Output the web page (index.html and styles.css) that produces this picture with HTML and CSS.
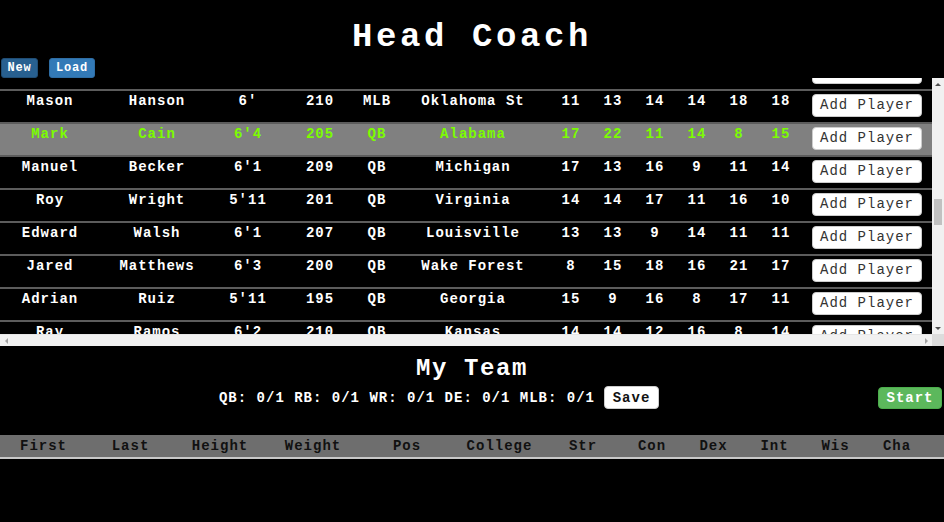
FILE: index.html
```html
<!DOCTYPE html>
<html lang="en">
<head>
<meta charset="utf-8">
<title>Head Coach</title>
<link rel="stylesheet" href="styles.css">
</head>
<body>
<h1 class="title">Head Coach</h1>
<div class="file-btns">
  <button class="btn-file btn-new">New</button>
  <button class="btn-file btn-load">Load</button>
</div>
<div class="pool-frame">
  <div class="pool" id="pool">
    <table class="players">
      <colgroup>
        <col class="c-first"><col class="c-last"><col class="c-height"><col class="c-weight"><col class="c-pos"><col class="c-college">
        <col class="c-stat"><col class="c-stat"><col class="c-stat"><col class="c-stat"><col class="c-stat"><col class="c-stat"><col class="c-action">
      </colgroup>
      <tbody id="pool-body">
        <tr><td></td><td></td><td></td><td></td><td></td><td></td><td></td><td></td><td></td><td></td><td></td><td></td><td class="act"><button class="btn-add btn-add-hidden" aria-label="Add Player"></button></td></tr>
        <tr><td>Mason</td><td>Hanson</td><td>6'</td><td>210</td><td>MLB</td><td>Oklahoma St</td><td>11</td><td>13</td><td>14</td><td>14</td><td>18</td><td>18</td><td class="act"><button class="btn-add">Add Player</button></td></tr>
        <tr class="selected"><td>Mark</td><td>Cain</td><td>6'4</td><td>205</td><td>QB</td><td>Alabama</td><td>17</td><td>22</td><td>11</td><td>14</td><td>8</td><td>15</td><td class="act"><button class="btn-add">Add Player</button></td></tr>
        <tr><td>Manuel</td><td>Becker</td><td>6'1</td><td>209</td><td>QB</td><td>Michigan</td><td>17</td><td>13</td><td>16</td><td>9</td><td>11</td><td>14</td><td class="act"><button class="btn-add">Add Player</button></td></tr>
        <tr><td>Roy</td><td>Wright</td><td>5'11</td><td>201</td><td>QB</td><td>Virginia</td><td>14</td><td>14</td><td>17</td><td>11</td><td>16</td><td>10</td><td class="act"><button class="btn-add">Add Player</button></td></tr>
        <tr><td>Edward</td><td>Walsh</td><td>6'1</td><td>207</td><td>QB</td><td>Louisville</td><td>13</td><td>13</td><td>9</td><td>14</td><td>11</td><td>11</td><td class="act"><button class="btn-add">Add Player</button></td></tr>
        <tr><td>Jared</td><td>Matthews</td><td>6'3</td><td>200</td><td>QB</td><td>Wake Forest</td><td>8</td><td>15</td><td>18</td><td>16</td><td>21</td><td>17</td><td class="act"><button class="btn-add">Add Player</button></td></tr>
        <tr><td>Adrian</td><td>Ruiz</td><td>5'11</td><td>195</td><td>QB</td><td>Georgia</td><td>15</td><td>9</td><td>16</td><td>8</td><td>17</td><td>11</td><td class="act"><button class="btn-add">Add Player</button></td></tr>
        <tr><td>Ray</td><td>Ramos</td><td>6'2</td><td>210</td><td>QB</td><td>Kansas</td><td>14</td><td>14</td><td>12</td><td>16</td><td>8</td><td>14</td><td class="act"><button class="btn-add">Add Player</button></td></tr>
      </tbody>
    </table>
  </div>
  <div class="vbar">
    <span class="arrow arrow-up"></span>
    <div class="vtrack"><div class="vthumb"></div></div>
    <span class="arrow arrow-down"></span>
  </div>
  <div class="hbar">
    <span class="arrow arrow-left"></span>
    <div class="htrack"></div>
    <span class="arrow arrow-right"></span>
  </div>
  <div class="corner"></div>
</div>
<section class="team">
  <h2 class="team-title">My Team</h2>
  <div class="team-bar">
    <div class="slots">
      <span class="slot-text">QB: 0/1 RB: 0/1 WR: 0/1 DE: 0/1 MLB: 0/1</span>
      <button class="btn-save">Save</button>
    </div>
    <button class="btn-start">Start</button>
  </div>
  <table class="team-table">
    <colgroup>
      <col class="t1"><col class="t2"><col class="t3"><col class="t4"><col class="t5"><col class="t6"><col class="t7">
      <col class="t8"><col class="t9"><col class="t10"><col class="t11"><col class="t12"><col class="t13">
    </colgroup>
    <thead>
      <tr><th>First</th><th>Last</th><th>Height</th><th>Weight</th><th>Pos</th><th>College</th><th>Str</th><th>Con</th><th>Dex</th><th>Int</th><th>Wis</th><th>Cha</th><th></th></tr>
    </thead>
    <tbody></tbody>
  </table>
</section>
<script src="app.js"></script>
</body>
</html>
```

FILE: styles.css
```css
html, body {
  margin: 0;
  padding: 0;
  background: #000;
  color: #fff;
  font-family: "Liberation Mono", "DejaVu Sans Mono", monospace;
  font-weight: bold;
}

.title {
  margin: 20px 0 0;
  height: 34px;
  font-size: 34px;
  line-height: 34px;
  letter-spacing: 3.6px;
  text-align: center;
  font-weight: bold;
}

.file-btns {
  display: flex;
  gap: 11px;
  padding: 4px 0 0 1px;
  height: 20px;
}

.btn-file {
  height: 20px;
  padding: 0;
  border: 1px solid #2e6da4;
  border-radius: 3px;
  color: #fff;
  font-family: inherit;
  font-weight: bold;
  font-size: 12px;
  letter-spacing: 0.8px;
  line-height: 18px;
}
.btn-new { background: #286090; border-color: #204d74; width: 37px; }
.btn-load { background: #337ab7; width: 46px; }

/* scroll frame */
.pool-frame {
  display: grid;
  grid-template-columns: 1fr 12px;
  grid-template-rows: 256px 12px;
}
.pool {
  overflow: hidden;
  min-width: 0;
}
.vbar {
  display: flex;
  flex-direction: column;
  background: #f1f1f1;
}
.vtrack {
  flex: 1;
  position: relative;
}
.vthumb {
  position: absolute;
  left: 2px;
  right: 2px;
  top: 109px;
  height: 26px;
  background: #c1c1c1;
}
.hbar {
  display: flex;
  background: #f1f1f1;
  border-top: 1px solid #e6e6e6;
}
.htrack { flex: 1; }
.corner { background: #dcdcdc; }

.arrow {
  flex: 0 0 12px;
  width: 12px;
  height: 12px;
  display: flex;
  align-items: center;
  justify-content: center;
}
.arrow::before {
  content: "";
  width: 0;
  height: 0;
}
.arrow-up::before {
  border-left: 3px solid transparent;
  border-right: 3px solid transparent;
  border-bottom: 3px solid #505050;
}
.arrow-down::before {
  border-left: 3px solid transparent;
  border-right: 3px solid transparent;
  border-top: 3px solid #505050;
}
.arrow-left::before {
  border-top: 3px solid transparent;
  border-bottom: 3px solid transparent;
  border-right: 3px solid #a3a3a3;
}
.arrow-right::before {
  border-top: 3px solid transparent;
  border-bottom: 3px solid transparent;
  border-left: 3px solid #a3a3a3;
}

.players {
  width: 100%;
  table-layout: fixed;
  border-collapse: separate;
  border-spacing: 0;
  font-size: 14px;
  letter-spacing: 1px;
}
.c-first { width: 100px; }
.c-last { width: 114px; }
.c-height { width: 68px; }
.c-weight { width: 76px; }
.c-pos { width: 38px; }
.c-college { width: 154px; }
.c-stat { width: 42px; }
.c-action { width: 130px; }

.players td {
  box-sizing: border-box;
  height: 33px;
  padding: 2px 0 0;
  border-top: 2px solid #5c5c5c;
  text-align: center;
  vertical-align: top;
  line-height: 16px;
  white-space: nowrap;
}
.players td.act {
  padding: 3px 0 0;
}
.players tr.selected td {
  background: #808080;
  color: #7cfc00;
}

.btn-add {
  width: 110px;
  height: 23px;
  padding: 0;
  background: #fff;
  border: 1px solid #ccc;
  border-radius: 4px;
  color: #333;
  font-family: inherit;
  font-size: 14px;
  font-weight: normal;
  letter-spacing: 1px;
  line-height: 21px;
  vertical-align: top;
}

.team-title {
  margin: 11px 0 0;
  height: 24px;
  font-size: 24px;
  line-height: 24px;
  letter-spacing: 1.6px;
  text-align: center;
}

.team-bar {
  display: flex;
  align-items: center;
  margin-top: 5px;
  height: 23px;
  padding-right: 2px;
}
.slots {
  flex: 1;
  display: flex;
  justify-content: center;
  align-items: center;
  gap: 9px;
  font-size: 14px;
  letter-spacing: 1px;
}
.btn-save {
  width: 55px;
  height: 23px;
  padding: 0;
  background: #fff;
  border: 1px solid #ccc;
  border-radius: 4px;
  color: #111;
  font-family: inherit;
  font-weight: bold;
  font-size: 14px;
  letter-spacing: 1px;
}
.btn-start {
  width: 64px;
  height: 22px;
  padding: 0;
  background: #5cb85c;
  border: 1px solid #4cae4c;
  border-radius: 4px;
  color: #fff;
  font-family: inherit;
  font-weight: bold;
  font-size: 14px;
  letter-spacing: 1px;
}

.team-table {
  margin-top: 26px;
  width: 100%;
  table-layout: fixed;
  border-collapse: separate;
  border-spacing: 0;
  font-size: 14px;
  letter-spacing: 1px;
}
.team-table th {
  height: 22px;
  padding: 0;
  background: #6e6e6e;
  color: #111;
  border-bottom: 2px solid #c8c8c8;
  text-align: center;
}
.t1, .t2 { width: 87px; }
.t3 { width: 92px; }
.t4, .t5 { width: 94px; }
.t6 { width: 91px; }
.t7 { width: 76px; }
.t8, .t12 { width: 62px; }
.t9, .t10, .t11 { width: 61px; }
.t13 { width: 16px; }
```

FILE: app.js
```js
(function () {
  // The player list is scrolled so that the first full row sits 11px below the top.
  var pool = document.getElementById("pool");
  var rows = document.getElementById("pool-body").rows;
  var off = rows[1].getBoundingClientRect().top - pool.getBoundingClientRect().top;
  pool.scrollTop = off - 11;
})();
```
